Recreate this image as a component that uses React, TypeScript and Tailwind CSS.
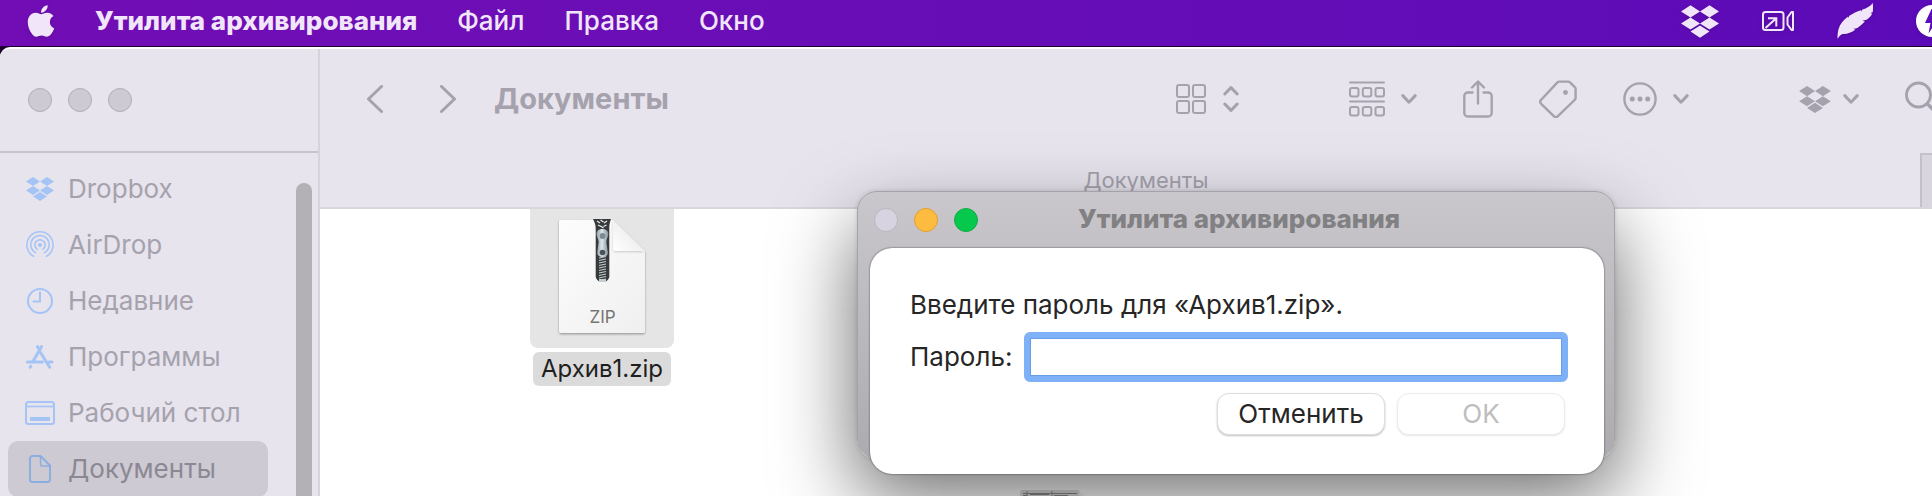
import React from "react";
import { FaApple } from "react-icons/fa";

type IconProps = { className?: string };

function DropboxIcon({ className }: IconProps) {
  return (
    <svg viewBox="0 1.8 24 20.4" className={className} fill="currentColor" aria-hidden="true">
      <path d="M6 1.807L0 5.629l6 3.822 6.001-3.822L6 1.807zM18 1.807l-6 3.822 6 3.822 6-3.822-6-3.822zM0 13.274l6 3.822 6.001-3.822L6 9.452l-6 3.822zM18 9.452l-6 3.822 6 3.822 6-3.822-6-3.822zM6 18.371l6.001 3.822 6-3.822-6-3.822L6 18.371z" />
    </svg>
  );
}

function VideoArrowIcon() {
  return (
    <svg viewBox="0 0 32 20" className="h-5 w-8" fill="none" stroke="currentColor" strokeWidth="2" strokeLinejoin="round" aria-hidden="true">
      <rect x="1" y="1" width="20.5" height="18" rx="2.5" />
      <path d="M3.5 17L14 7.5M6 7.2h8.3V15.5" strokeLinejoin="miter" />
      <path d="M31 1v18h-1.5L25.500 13.500V6.500L29.500 1z" />
    </svg>
  );
}

function FeatherIcon() {
  return (
    <svg viewBox="0 0 36 36" className="size-9" fill="currentColor" aria-hidden="true">
      <path d="M35.800 0C34 3 30 5 25 6.800l-.2 1.800-.8-1.400C20 8.600 16 10.200 12 13l-.2 1.800-.9-1C6.500 17 3 21 1.400 26.500.8 29.500.2 33 .6 35.700 2 33.500 3.500 31.800 5.500 31c4.500.3 9-1.500 13-4.500l-2.300-.5 4.200-.9c2.700-2 5-4.200 7.500-6.700l-2.600-.6 4.300-1c2.300-1.700 4.400-3.400 5.600-6.200l-2-.4 2.600-1.300C36 6 36.200 3 35.800 0z" />
    </svg>
  );
}

function BoltIcon() {
  return (
    <svg viewBox="0 0 32 32" className="size-8 text-white" aria-hidden="true">
      <circle cx="16" cy="16" r="16" fill="currentColor" />
      <path d="M15.500 4L9 18h5.500L12.500 28.500 22 14h-5.500L20 4z" fill="#5c0bb8" />
    </svg>
  );
}

function ChevronSide({ flip }: { flip?: boolean }) {
  return (
    <svg viewBox="0 0 16 28" className="h-7 w-4" fill="none" stroke="currentColor" strokeWidth="3" strokeLinecap="round" strokeLinejoin="round" aria-hidden="true">
      <path d={flip ? "M1.500 1.500L14.500 14l-13 12.500" : "M14.500 1.500L1.500 14l13 12.500"} />
    </svg>
  );
}

function ChevronSmall() {
  return (
    <svg viewBox="0 0 16 10" className="h-[10px] w-4" fill="none" stroke="currentColor" strokeWidth="3" strokeLinecap="round" strokeLinejoin="round" aria-hidden="true">
      <path d="M1.800 1.600L8 8.200l6.200-6.600" />
    </svg>
  );
}

function UpDownIcon() {
  return (
    <svg viewBox="0 0 16 26" className="h-[26px] w-4" fill="none" stroke="currentColor" strokeWidth="3" strokeLinecap="round" strokeLinejoin="round" aria-hidden="true">
      <path d="M1.800 8L8 1.600 14.200 8M1.800 18L8 24.400 14.200 18" />
    </svg>
  );
}

function GridIcon() {
  return (
    <svg viewBox="0 0 30 30" className="size-[30px]" fill="none" stroke="currentColor" strokeWidth="2" aria-hidden="true">
      <rect x="1" y="1" width="12" height="12" rx="2" />
      <rect x="17" y="1" width="12" height="12" rx="2" />
      <rect x="1" y="17" width="12" height="12" rx="2" />
      <rect x="17" y="17" width="12" height="12" rx="2" />
    </svg>
  );
}

function GroupIcon() {
  return (
    <svg viewBox="0 0 36 36" className="size-9" fill="none" stroke="currentColor" strokeWidth="2" strokeLinecap="round" aria-hidden="true">
      <path d="M1 1.500h34M1 20.500h34" />
      <rect x="1" y="7" width="8.500" height="8.500" rx="2" />
      <rect x="13.800" y="7" width="8.500" height="8.500" rx="2" />
      <rect x="26.500" y="7" width="8.500" height="8.500" rx="2" />
      <rect x="1" y="26" width="8.500" height="8.500" rx="2" />
      <rect x="13.800" y="26" width="8.500" height="8.500" rx="2" />
      <rect x="26.500" y="26" width="8.500" height="8.500" rx="2" />
    </svg>
  );
}

function ShareIcon() {
  return (
    <svg viewBox="0 0 30 38" className="h-[38px] w-[30px]" fill="none" stroke="currentColor" strokeWidth="2.400" strokeLinecap="round" strokeLinejoin="round" aria-hidden="true">
      <path d="M9.500 12.500H4.800a3.500 3.500 0 0 0-3.500 3.500v17a3.500 3.500 0 0 0 3.500 3.500h20.400a3.500 3.500 0 0 0 3.500-3.500V16a3.500 3.500 0 0 0-3.500-3.500h-4.700" />
      <path d="M15 23.500V2M9 7.500l6-6 6 6" />
    </svg>
  );
}

function TagIcon() {
  return (
    <svg viewBox="0 0 38 38" className="size-[38px]" fill="none" stroke="currentColor" strokeWidth="2.400" strokeLinejoin="round" aria-hidden="true">
      <path d="M20.500 1.600h8.600c1 0 1.500.3 2.200 1l4.300 4.300c.7.700 1 1.200 1 2.200v8.600c0 1-.3 1.600-1 2.300L18.900 36.200c-1.300 1.300-2.800 1.300-4.100 0L2.200 23.800c-1.300-1.300-1.300-2.800 0-4.100L18.200 2.600c.7-.7 1.300-1 2.300-1z" />
      <circle cx="26.500" cy="12.500" r="2.400" fill="currentColor" stroke="none" />
    </svg>
  );
}

function MoreIcon() {
  return (
    <svg viewBox="0 0 34 34" className="size-[34px]" fill="none" stroke="currentColor" strokeWidth="2.400" aria-hidden="true">
      <circle cx="17" cy="17" r="15.600" />
      <g fill="currentColor" stroke="none">
        <circle cx="9.300" cy="17" r="2.500" />
        <circle cx="17" cy="17" r="2.500" />
        <circle cx="24.700" cy="17" r="2.500" />
      </g>
    </svg>
  );
}

function SearchIcon() {
  return (
    <svg viewBox="0 0 36 36" className="size-9" fill="none" stroke="currentColor" strokeWidth="2.800" strokeLinecap="round" aria-hidden="true">
      <circle cx="13.500" cy="14" r="12" />
      <path d="M22.500 23l10.500 10.500" strokeWidth="3.400" />
    </svg>
  );
}

function AirDropIcon() {
  return (
    <svg viewBox="0 0 28 28" className="size-7" fill="none" stroke="currentColor" strokeWidth="1.500" strokeLinecap="round" aria-hidden="true">
      <circle cx="14" cy="14" r="2" fill="currentColor" stroke="none" />
      <path d="M11.200 18.300a5.200 5.200 0 1 1 5.600 0" />
      <path d="M9.500 21.700a9.200 9.200 0 1 1 9 0" />
      <path d="M7.700 25.400a13.100 13.100 0 1 1 12.600 0" />
    </svg>
  );
}

function ClockIcon() {
  return (
    <svg viewBox="0 0 28 28" className="size-7" fill="none" stroke="currentColor" strokeWidth="2" strokeLinecap="round" strokeLinejoin="round" aria-hidden="true">
      <circle cx="14" cy="14" r="12" />
      <path d="M14 5.500V14.400H7.500" />
    </svg>
  );
}

function AppsIcon() {
  return (
    <svg viewBox="0 0 28 28" className="size-7" fill="none" stroke="currentColor" strokeWidth="3" strokeLinecap="round" aria-hidden="true">
      <path d="M1.500 19H16.500M23 19h3M15.600 3.500L7.500 17.500M11.400 3.500L13 6.200M14.500 9.500l9.200 14.800M4.800 23.300l-.6 1" />
    </svg>
  );
}

function DesktopIcon() {
  return (
    <svg viewBox="0 0 30 24" className="h-6 w-[30px]" fill="none" stroke="currentColor" strokeWidth="2" aria-hidden="true">
      <rect x="1" y="1" width="28" height="22" rx="2.500" />
      <path d="M1 5.500h28" strokeWidth="1.600" />
      <rect x="5" y="16" width="20" height="4" rx="0.500" fill="currentColor" stroke="none" />
    </svg>
  );
}

function DocumentIcon() {
  return (
    <svg viewBox="0 0 22 28" className="h-7 w-[22px]" fill="none" stroke="currentColor" strokeWidth="2" strokeLinejoin="round" aria-hidden="true">
      <path d="M3.500 1H11.500L21 10.500V24.500a2.500 2.500 0 0 1-2.500 2.500h-15A2.500 2.500 0 0 1 1 24.500v-21A2.500 2.500 0 0 1 3.500 1z" />
      <path d="M11.500 1v8.500a1.500 1.500 0 0 0 1.500 1.500h8" strokeWidth="1.500" />
    </svg>
  );
}

function ZipFileIcon() {
  const teeth = Array.from({ length: 10 }, (_, i) => 39 + i * 2.500);
  return (
    <svg viewBox="0 0 90 120" className="h-[120px] w-[90px]" role="img" aria-label="ZIP">
      <defs>
        <linearGradient id="page" x1="0" y1="0" x2="1" y2="1">
          <stop offset="0" stopColor="#fdfdfd" />
          <stop offset="1" stopColor="#efefef" />
        </linearGradient>
        <linearGradient id="fold" x1="0" y1="1" x2="0.700" y2="0.300">
          <stop offset="0" stopColor="#ffffff" />
          <stop offset="1" stopColor="#ebebeb" />
        </linearGradient>
        <linearGradient id="pull" x1="0" y1="0" x2="1" y2="0">
          <stop offset="0" stopColor="#8f9da4" />
          <stop offset="0.450" stopColor="#dbe7ec" />
          <stop offset="1" stopColor="#84929a" />
        </linearGradient>
        <filter id="soft" x="-20%" y="-20%" width="140%" height="140%">
          <feDropShadow dx="0" dy="1.200" stdDeviation="0.900" floodColor="#000" floodOpacity="0.350" />
        </filter>
        <filter id="faint" x="-20%" y="-20%" width="140%" height="140%">
          <feDropShadow dx="0" dy="1" stdDeviation="1.200" floodColor="#000" floodOpacity="0.180" />
        </filter>
      </defs>
      <path d="M4 2h52l32 31v80a2 2 0 0 1-2 2H4a2 2 0 0 1-2-2V4a2 2 0 0 1 2-2z" fill="url(#page)" filter="url(#soft)" />
      <path d="M56 2l31 31H59a3 3 0 0 1-3-3z" fill="url(#fold)" filter="url(#faint)" />
      <path d="M36 1h18c-1.500 4-1.700 6-1.700 10v48a7 6.500 0 0 1-13.600 0V11c0-4-.7-6-2.700-10z" fill="#38393b" />
      <path d="M40 3l3 2M41 7l3 1.500M50 3l-3 2M49.500 7l-3 1.500M43.500 2l3 2M43.500 8l3 2" stroke="#e4eaed" strokeWidth="1.300" />
      {teeth.map((y) => (
        <path key={y} d={`M42 ${y + 1}l7-1.500`} stroke="#c3ced3" strokeWidth="1.200" />
      ))}
      <rect x="42" y="61" width="7" height="3" fill="#c3ced3" />
      <path d="M45.300 11c4 0 6 2.200 6 5 0 3-2 5-2 8l1.500 10c.4 3-2 5-5.300 5s-5.600-2-5.200-5l1.400-10c0-3-2.200-5-2.200-8 0-2.800 2-5 5.800-5z" fill="url(#pull)" />
      <ellipse cx="45.500" cy="18" rx="2.800" ry="3" fill="#7c8a92" />
      <circle cx="45.500" cy="34.500" r="2.800" fill="#4c5357" />
      <text x="45.500" y="105" textAnchor="middle" fontSize="17" fill="#757575" fontFamily="Inter, sans-serif">ZIP</text>
    </svg>
  );
}

function DriveIcon() {
  return (
    <svg viewBox="0 0 64 40" className="h-10 w-16" aria-hidden="true">
      <rect x="0" y="0" width="60" height="40" rx="3" fill="#dedede" />
      <path d="M59 1l5 4v35h-5z" fill="#f2f2f2" />
      <path d="M3 3.500h54M3 5.500h4M10 4.500h19M34 5.500h14M7 1v6M32 1v6" stroke="#8c8c8c" strokeWidth="1" />
    </svg>
  );
}

const sidebarItems = [
  { label: "Dropbox", icon: <DropboxIcon className="h-6 w-7" /> },
  { label: "AirDrop", icon: <AirDropIcon /> },
  { label: "Недавние", icon: <ClockIcon /> },
  { label: "Программы", icon: <AppsIcon /> },
  { label: "Рабочий стол", icon: <DesktopIcon /> },
  { label: "Документы", icon: <DocumentIcon />, active: true },
];

function MenuBar() {
  return (
    <header className="flex h-[46px] shrink-0 items-center justify-between bg-linear-to-r from-[#720db5] to-[#5c0bb8] pb-1 pl-[23px] text-[26px] leading-8 text-[#f1e6f9]">
      <nav className="flex items-center gap-10 font-medium text-shadow-[0_2px_4px_rgb(0_0_0/0.3)]">
        <button type="button" aria-label="Apple">
          <FaApple className="size-9 drop-shadow-sm" />
        </button>
        <button type="button" className="-ml-1 font-extrabold">Утилита архивирования</button>
        <button type="button">Файл</button>
        <button type="button">Правка</button>
        <button type="button">Окно</button>
      </nav>
      <div className="-mr-4 flex shrink-0 items-center gap-[43px] drop-shadow-sm">
        <DropboxIcon className="h-[33px] w-[38px]" />
        <VideoArrowIcon />
        <FeatherIcon />
        <BoltIcon />
      </div>
    </header>
  );
}

function Sidebar() {
  return (
    <aside className="flex w-80 shrink-0 flex-col border-r-2 border-[#d6d3da] bg-[#e7e4ee]">
      <div className="flex h-[104px] shrink-0 items-center gap-4 border-b-2 border-[#c6c3cc] pl-7">
        <span className="size-6 rounded-full border border-[#b0adb6] bg-[#cdcad4]" />
        <span className="size-6 rounded-full border border-[#b0adb6] bg-[#cdcad4]" />
        <span className="size-6 rounded-full border border-[#b0adb6] bg-[#cdcad4]" />
      </div>
      <div className="flex flex-1 justify-between pr-[6px]">
        <ul className="w-[268px] pt-2 pl-2">
          {sidebarItems.map((item) => (
            <li key={item.label}>
              <a
                href="#"
                className={
                  item.active
                    ? "flex h-14 items-center gap-3 rounded-[10px] bg-[#cdcad4] pl-4 text-[26px] leading-8 text-[#8b8893]"
                    : "flex h-14 items-center gap-3 rounded-[10px] pl-4 text-[26px] leading-8 text-[#a5a2ad]"
                }
              >
                <span className={item.active ? "flex w-8 justify-center text-[#8aaee0]" : "flex w-8 justify-center text-[#a3c4f5]"}>{item.icon}</span>
                {item.label}
              </a>
            </li>
          ))}
        </ul>
        <div className="mt-[30px] w-4 rounded-t-full bg-[#b3b0b6]" />
      </div>
    </aside>
  );
}

function Toolbar() {
  return (
    <div className="flex h-[104px] shrink-0 items-center justify-between pb-1 pl-[47px] text-[#a5a2ad]">
      <div className="flex items-center">
        <button type="button" aria-label="Назад"><ChevronSide /></button>
        <button type="button" aria-label="Вперёд" className="ml-[57px]"><ChevronSide flip /></button>
        <h1 className="ml-[38px] text-[29px] leading-9 font-bold">Документы</h1>
      </div>
      <div className="-mr-[9px] flex shrink-0 items-center gap-[110px]">
        <button type="button" aria-label="Вид" className="flex items-center gap-[17px]"><GridIcon /><UpDownIcon /></button>
        <div className="flex items-center gap-[46px]">
          <button type="button" aria-label="Группировка" className="flex items-center gap-4"><GroupIcon /><ChevronSmall /></button>
          <button type="button" aria-label="Поделиться"><ShareIcon /></button>
          <button type="button" aria-label="Теги"><TagIcon /></button>
          <button type="button" aria-label="Действия" className="flex items-center gap-4"><MoreIcon /><ChevronSmall /></button>
        </div>
        <div className="flex items-center gap-[46px]">
          <button type="button" aria-label="Dropbox" className="flex items-center gap-3"><DropboxIcon className="h-[27px] w-8" /><ChevronSmall /></button>
          <button type="button" aria-label="Поиск"><SearchIcon /></button>
        </div>
      </div>
    </div>
  );
}

function PasswordDialog() {
  return (
    <section
      role="dialog"
      aria-labelledby="dialog-title"
      className="absolute top-[191px] left-[857px] w-[758px] rounded-[20px] border border-[#a5a3a7] bg-linear-to-b from-[#c9c7cb] to-[#adabb0] pr-[10px] pl-3 shadow-[0_36px_80px_rgb(0_0_0/0.6),0_0_4px_rgb(0_0_0/0.15)]"
    >
      <div className="flex h-14 items-center">
        <div className="flex flex-1 gap-4 pl-1">
          <span className="size-6 rounded-full border border-[#b9b5c2] bg-[#d8d3e1]" />
          <span className="size-6 rounded-full border border-[#e0a030] bg-[#fdbc40]" />
          <span className="size-6 rounded-full border border-[#14ab44] bg-[#05c84c]" />
        </div>
        <h2 id="dialog-title" className="pb-[2px] text-[26px] leading-8 font-extrabold text-[#818083]">Утилита архивирования</h2>
        <div className="flex-1" />
      </div>
      <form className="-mb-4 rounded-[22px] bg-white pt-[41px] pr-9 pb-[39px] pl-10 text-[26px] leading-8 text-[#262626] shadow-[0_0_2px_rgb(0_0_0/0.7)]">
        <p>Введите пароль для «Архив1.zip».</p>
        <div className="mt-[11px] flex items-center gap-3">
          <label htmlFor="password">Пароль:</label>
          <input
            id="password"
            type="password"
            className="h-[50px] min-w-0 flex-1 rounded-md border-[6px] border-[#7fb1f9] bg-white px-2 shadow-[inset_0_0_0_1px_#659de6] outline-none"
          />
        </div>
        <div className="mt-[11px] flex justify-end gap-3 pr-[3px]">
          <button type="button" className="h-[42px] w-[168px] rounded-xl border border-[#dedede] bg-white shadow-[0_1px_2px_rgb(0_0_0/0.25)]">Отменить</button>
          <button type="submit" disabled className="h-[42px] w-[168px] rounded-xl border border-[#ececec] bg-white text-[#bebebe] shadow-[0_1px_2px_rgb(0_0_0/0.1)]">OK</button>
        </div>
      </form>
    </section>
  );
}

export default function App() {
  return (
    <div className="relative flex h-screen flex-col overflow-hidden bg-[#1d0230] font-['Inter',sans-serif]">
      <MenuBar />
      <div className="mt-px flex min-h-0 flex-1 overflow-hidden rounded-tl-[10px] border-t-2 border-white bg-white">
        <Sidebar />
        <main className="flex min-w-0 flex-1 flex-col">
          <div className="bg-[#e7e4ee]">
            <Toolbar />
            <div className="flex h-14 border-b-2 border-[#d9d7dc] text-[#a5a2ad]">
              <div className="flex-1 pl-[52px] text-center text-[22px] leading-[54px]">Документы</div>
              <div className="w-3 border-t-2 border-l-2 border-[#c3c0ca] bg-[#d8d5df]" />
            </div>
          </div>
          <div className="relative min-h-0 flex-1 overflow-hidden">
            <figure className="ml-[210px] flex w-36 flex-col items-center">
              <div className="flex h-[139px] w-full justify-center rounded-b-lg bg-[#e5e5e5] pt-[9px]">
                <ZipFileIcon />
              </div>
              <figcaption className="mt-1 rounded-md bg-[#dbdbdb] px-2 text-2xl leading-[34px] text-[#1f1f1f]">Архив1.zip</figcaption>
            </figure>
            <div className="absolute top-[281px] left-[700px]">
              <DriveIcon />
            </div>
          </div>
        </main>
      </div>
      <PasswordDialog />
    </div>
  );
}
